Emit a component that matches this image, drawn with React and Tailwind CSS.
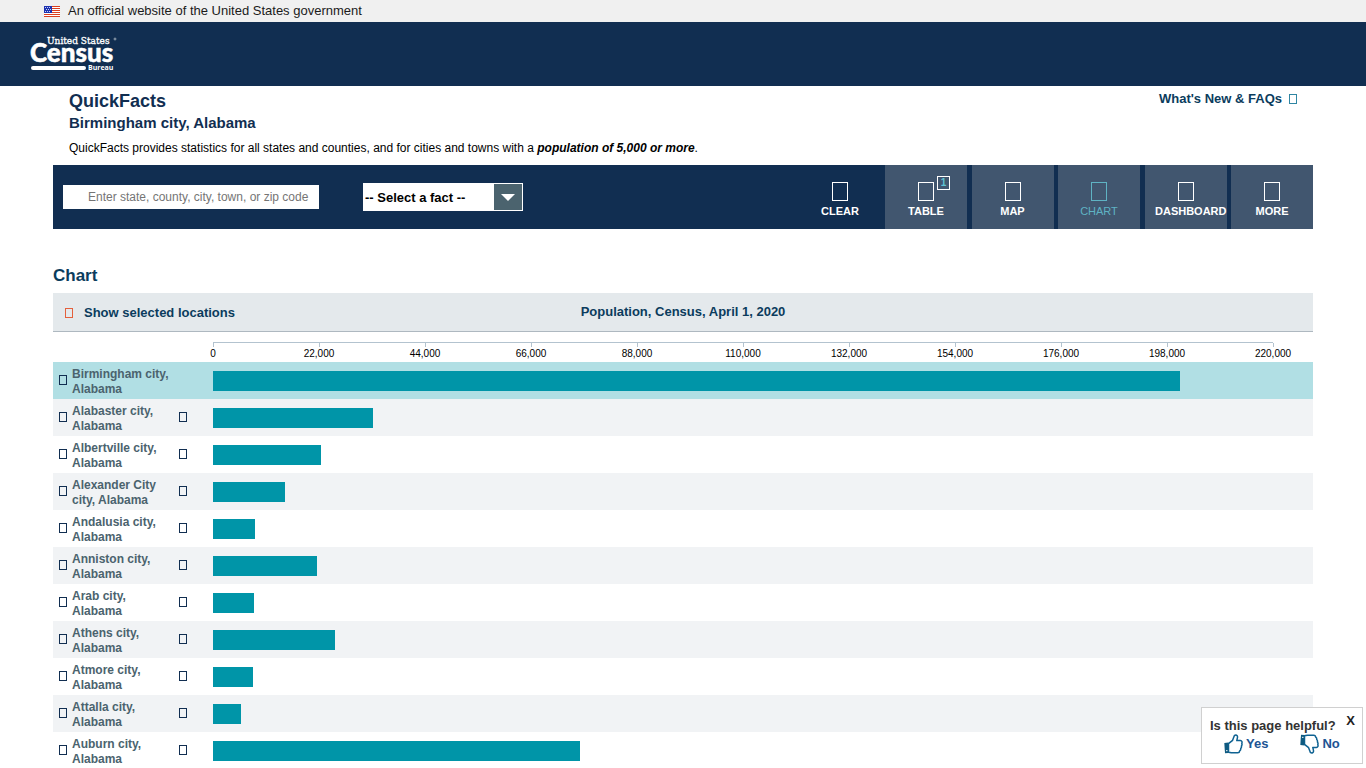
import { useState } from "react";
import clsx from "clsx";

const AXIS_MAX = 220000;
const AXIS_STEP = 22000;
const TICKS = Array.from({ length: AXIS_MAX / AXIS_STEP + 1 }, (_, i) => i * AXIS_STEP);

const LOCATIONS = [
  { name: "Birmingham city, Alabama", population: 200733, selected: true },
  { name: "Alabaster city, Alabama", population: 33284 },
  { name: "Albertville city, Alabama", population: 22386 },
  { name: "Alexander City city, Alabama", population: 14843 },
  { name: "Andalusia city, Alabama", population: 8805 },
  { name: "Anniston city, Alabama", population: 21564 },
  { name: "Arab city, Alabama", population: 8461 },
  { name: "Athens city, Alabama", population: 25406 },
  { name: "Atmore city, Alabama", population: 8391 },
  { name: "Attalla city, Alabama", population: 5827 },
  { name: "Auburn city, Alabama", population: 76143 },
];

const TABS = [
  { label: "TABLE", count: 1 },
  { label: "MAP" },
  { label: "CHART", active: true },
  { label: "DASHBOARD" },
  { label: "MORE" },
];

function GlyphBox({ className }) {
  return <span className={clsx("block shrink-0 border", className)} aria-hidden="true" />;
}

function FlagIcon() {
  return (
    <svg className="h-[11px] w-4 shrink-0" viewBox="0 0 16 11" aria-hidden="true" shapeRendering="crispEdges">
      <rect width="16" height="11" fill="#fff" />
      {[0, 2, 4, 6, 8, 10].map((y) => (
        <rect key={y} y={y} width="16" height="1" fill="#db3e1f" />
      ))}
      <rect width="8" height="7" fill="#1e33b1" />
      {[1, 3, 5].map((y) =>
        [1, 3, 5].map((x) => (
          <rect key={`${x}-${y}`} x={x + (y === 3 ? 1 : 0)} y={y} width="1" height="1" fill="#c9d0f5" />
        )),
      )}
    </svg>
  );
}

function CensusLogo() {
  return (
    <svg className="h-9 w-[88px] overflow-visible" viewBox="0 0 88 36" role="img" aria-label="United States Census Bureau">
      <g fill="#fff">
        <text
          x="17"
          y="8"
          fontFamily="'DejaVu Serif Condensed', 'DejaVu Serif', serif"
          fontStretch="condensed"
          fontSize="10"
          stroke="#fff"
          strokeWidth="0.3"
        >
          United States
        </text>
        <circle cx="85" cy="3" r="1" fill="none" stroke="#fff" strokeWidth="0.5" />
        <text x="0" y="26" fontFamily="Lato, sans-serif" fontWeight="900" fontSize="26" stroke="#fff" strokeWidth="0.5">
          Census
        </text>
        <rect x="1" y="30" width="55" height="4" rx="2" />
        <text x="58" y="34" fontFamily="'Open Sans', sans-serif" fontWeight="700" fontSize="7">
          Bureau
        </text>
      </g>
    </svg>
  );
}

function ThumbIcon({ down }) {
  return (
    <svg className={clsx("h-5 w-[19px]", down && "-scale-y-100")} viewBox="0 0 19 20" aria-hidden="true">
      <path
        d="M4.5 9.6 L8.6 6.3 L10.4 1.6 C11.8 0.4 13.8 1.2 13.5 3.3 L12.8 6.6 L16.4 6.6 C17.9 6.7 18.4 8 17.8 9.4 C18.2 10.4 18 11.3 17.4 12 C17.7 13 17.4 13.9 16.7 14.5 C16.9 15.6 16.5 16.4 15.7 16.9 C15.6 18.1 14.8 18.8 13.7 18.8 L7.3 18.8 L4.5 18.2 Z"
        fill="#fff"
        stroke="#0f6292"
        strokeWidth="1.5"
        strokeLinejoin="round"
      />
      <path d="M0.3 9 L4.4 8.6 L4.4 19 L1 19.2 Z" fill="#0f5a80" />
      <rect x="2.2" y="16" width="1.2" height="1.2" fill="#fff" />
    </svg>
  );
}

function Toolbar() {
  return (
    <div className="flex h-16 items-center bg-[#112e51]">
      <input
        type="text"
        aria-label="Enter state, county, city, town, or zip code"
        placeholder="Enter state, county, city, town, or zip code"
        className="ml-2.5 h-6 w-64 bg-white pl-[25px] text-[12px] text-black placeholder:text-[#757575]"
      />
      <div className="relative ml-11">
        <select
          aria-label="Select a fact"
          className="block h-7 w-40 appearance-none bg-white pt-0.5 pl-0.5 text-[13px] font-bold text-black"
        >
          <option>-- Select a fact --</option>
        </select>
        <span className="pointer-events-none absolute inset-y-px right-px flex w-7 items-center justify-center bg-[#4b636e]">
          <svg className="h-[7px] w-[14px]" viewBox="0 0 14 7" aria-hidden="true">
            <path d="M0 0h14L7 7z" fill="#fff" />
          </svg>
        </span>
      </div>

      <div className="ml-auto flex self-stretch text-[11px] leading-3 font-bold text-white">
        <button type="button" className="flex w-[90px] flex-col items-center pt-[17px]">
          <GlyphBox className="h-[19px] w-4 border-white" />
          <span className="mt-1">CLEAR</span>
        </button>
        <nav className="flex w-[428px] justify-between">
          {TABS.map((tab) => (
            <button
              key={tab.label}
              type="button"
              className={clsx(
                "flex w-[82px] flex-col items-center bg-[#41566f] pt-[17px]",
                tab.active && "font-normal text-[#5fb3c4]",
              )}
            >
              <span className="relative">
                <GlyphBox className={clsx("h-[19px] w-4", tab.active ? "border-[#5fb3c4]" : "border-white")} />
                {tab.count && (
                  <span className="absolute -top-1.5 left-[19px] flex h-[14px] w-[13px] items-center justify-center border border-white text-[10px] leading-3 text-[#5fc3d4]">
                    {tab.count}
                  </span>
                )}
              </span>
              <span className={clsx("mt-1", tab.label === "DASHBOARD" && "self-end")}>{tab.label}</span>
            </button>
          ))}
        </nav>
      </div>
    </div>
  );
}

function Axis() {
  return (
    <div className="h-[30px] pt-2.5 pr-10 pl-40">
      <div className="relative h-1 border-t border-[#b3c3cf]">
        {TICKS.map((tick) => (
          <span
            key={tick}
            className="absolute top-0 flex w-16 -translate-x-1/2 flex-col items-center gap-px text-[10px] leading-3 text-black"
            style={{ left: `${(tick / AXIS_MAX) * 100}%` }}
          >
            <span className="h-1 w-px bg-[#b3c3cf]" />
            {tick.toLocaleString("en-US")}
          </span>
        ))}
      </div>
    </div>
  );
}

function LocationRow({ location }) {
  return (
    <li className={clsx("flex h-[37px] items-center", location.selected ? "bg-[#b1dfe4]" : "even:bg-[#f1f3f5]")}>
      <div className="flex w-40 shrink-0 items-start self-stretch pt-[5px] pl-1.5">
        <GlyphBox className="mt-2 h-[10px] w-2 border-[#112e51]" />
        <a href="#location" className="ml-[5px] w-[100px] text-[12px] leading-[15px] font-bold text-[#4b636e]">
          {location.name}
        </a>
        {!location.selected && (
          <button type="button" aria-label={`Add ${location.name}`} className="mt-2 ml-[7px]">
            <GlyphBox className="h-[10px] w-2 border-[#112e51]" />
          </button>
        )}
      </div>
      <div className="flex-1 pr-10">
        <div className="h-5 bg-[#0095a8]" style={{ width: `${(location.population / AXIS_MAX) * 100}%` }} />
      </div>
    </li>
  );
}

function FeedbackBox({ onClose }) {
  return (
    <aside className="fixed right-[3px] bottom-1 h-[57px] w-[162px] border border-[#d0d0d0] bg-white pt-2.5 pl-2 text-[13px] leading-4 font-bold">
      <p className="text-[#333]">Is this page helpful?</p>
      <button type="button" aria-label="Close" onClick={onClose} className="absolute top-[5px] right-[7px] text-[#222]">
        X
      </button>
      <div className="flex gap-8 pl-3.5 text-[#205493]">
        <button type="button" className="flex items-center gap-[3px]">
          <ThumbIcon />
          Yes
        </button>
        <button type="button" className="flex items-center gap-[3px]">
          <ThumbIcon down />
          No
        </button>
      </div>
    </aside>
  );
}

export default function App() {
  const [showFeedback, setShowFeedback] = useState(true);

  return (
    <div className="bg-white font-['Liberation_Sans',Arial,sans-serif]">
      <div className="flex h-[22px] items-center gap-2 bg-[#f0f0f0] pl-11 text-[13px] text-[#1b1b1b]">
        <FlagIcon />
        <p>An official website of the United States government</p>
      </div>
      <header className="flex h-16 items-center bg-[#112e51] pl-[30px]">
        <a href="#home">
          <CensusLogo />
        </a>
      </header>

      <main className="mx-auto max-w-[1260px]">
        <div className="flex h-[79px] justify-between px-4 pt-1">
          <div>
            <h1 className="text-[18px] leading-[22px] font-bold text-[#112e51]">QuickFacts</h1>
            <h2 className="text-[15px] leading-[22px] font-bold text-[#112e51]">Birmingham city, Alabama</h2>
            <p className="mt-1 text-[12px] leading-5 text-black">
              QuickFacts provides statistics for all states and counties, and for cities and towns with a{" "}
              <strong>
                <em>population of 5,000 or more</em>
              </strong>
              .
            </p>
          </div>
          <a href="#faq" className="flex h-[18px] items-center gap-[7px] text-[13px] font-bold text-[#0b3c5d]">
            What&apos;s New &amp; FAQs
            <GlyphBox className="h-[10px] w-2 border-[#2f86a3]" />
          </a>
        </div>

        <Toolbar />

        <section className="pt-[37px]">
          <h2 className="pb-[7px] text-[17px] leading-5 font-bold text-[#0b3c5d]">Chart</h2>
          <div className="grid h-[39px] grid-cols-3 items-center border-b border-[#aeb8c0] bg-[#e4e9ec] text-[13px] font-bold text-[#0b3c5d]">
            <button type="button" className="flex items-center gap-[11px] pt-px pl-3 text-left">
              <GlyphBox className="h-[10px] w-2 border-[#e4603c]" />
              Show selected locations
            </button>
            <h3 className="text-center">Population, Census, April 1, 2020</h3>
          </div>
          <Axis />
          <ul>
            {LOCATIONS.map((location) => (
              <LocationRow key={location.name} location={location} />
            ))}
          </ul>
        </section>
      </main>

      {showFeedback && <FeedbackBox onClose={() => setShowFeedback(false)} />}
    </div>
  );
}
